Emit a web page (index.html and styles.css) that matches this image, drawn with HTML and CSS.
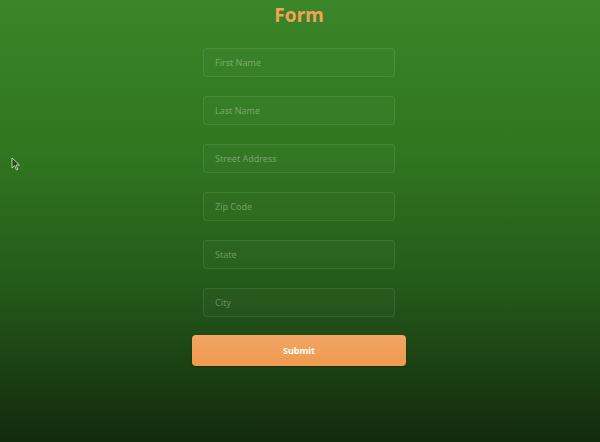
FILE: index.html
```html
<!DOCTYPE html>
<html>
<head>
<meta charset="utf-8">
<link rel="stylesheet" href="styles.css">
</head>
<body>
<main class="page">
  <h1 class="title">Form</h1>
  <form class="form">
    <input class="field" type="text" placeholder="First Name">
    <input class="field" type="text" placeholder="Last Name">
    <input class="field" type="text" placeholder="Street Address">
    <input class="field" type="text" placeholder="Zip Code">
    <input class="field" type="text" placeholder="State">
    <input class="field" type="text" placeholder="City">
    <button class="submit" type="button">Submit</button>
  </form>
</main>
<svg class="cursor" width="10" height="14" viewBox="0 0 10 14">
  <path d="M1 1 L1 11 L3.5 8.5 L5.5 13 L7 12.3 L5 8 L8.5 8 Z" fill="#1e4a16" stroke="#c8d8c0" stroke-width="0.9" stroke-linejoin="round"/>
</svg>
</body>
</html>
```
FILE: styles.css
```css
html, body {
  margin: 0;
  padding: 0;
}
body {
  width: 600px;
  height: 442px;
  overflow: hidden;
  position: relative;
  background: linear-gradient(to bottom, #3a8628 0%, #30751f 35%, #24591a 65%, #132a0d 100%);
  font-family: "Noto Sans", "Open Sans", sans-serif;
}
.page {
  display: flex;
  flex-direction: column;
  align-items: center;
  padding-right: 2px;
}
.title {
  margin: 2px 0 0;
  font-size: 19px;
  line-height: 26px;
  font-weight: 700;
  color: #f4a258;
}
.form {
  margin-top: 20px;
  display: flex;
  flex-direction: column;
  align-items: center;
  gap: 19px;
}
.field {
  box-sizing: border-box;
  width: 192px;
  height: 29px;
  margin: 0;
  padding: 0 11px;
  border: 1px solid rgba(255, 255, 255, 0.09);
  border-radius: 4px;
  background: rgba(255, 255, 255, 0.02);
  font-family: inherit;
  font-size: 9px;
  color: #d8e4d0;
  outline: none;
}
.field::placeholder {
  color: rgba(220, 235, 210, 0.4);
}
.submit {
  box-sizing: border-box;
  width: 214px;
  height: 31px;
  margin-top: -1px;
  border: none;
  border-radius: 4px;
  background: linear-gradient(to bottom, #f2a565, #ef9a4e);
  color: #ffffff;
  font-family: inherit;
  font-size: 9px;
  font-weight: 700;
  box-shadow: 0 1px 2px rgba(0, 0, 0, 0.25);
}
.cursor {
  position: absolute;
  left: 11px;
  top: 157px;
}
```
